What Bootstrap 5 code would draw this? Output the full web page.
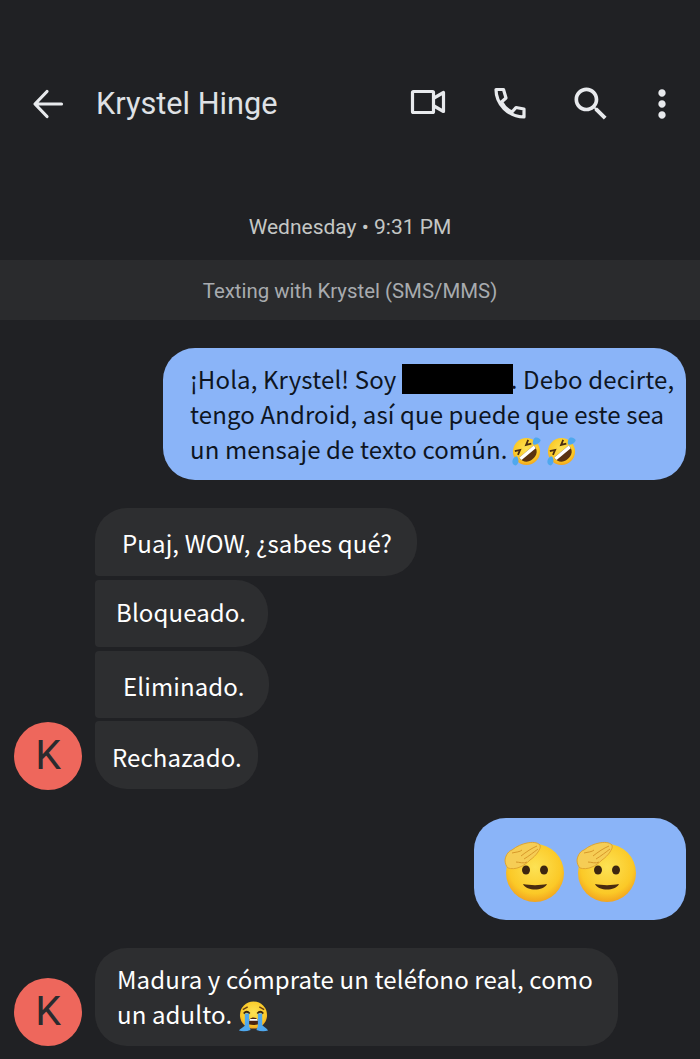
<!DOCTYPE html>
<html lang="es">
<head>
    <meta charset="UTF-8">
    <meta name="viewport" content="width=device-width, initial-scale=1.0">
    <title>Krystel Hinge</title>
    <link href="https://cdn.jsdelivr.net/npm/bootstrap@5.3.0/dist/css/bootstrap.min.css" rel="stylesheet">
    <style>
        html, body { height: 1059px; overflow: hidden; }
        body { background: #202124; color: #fff; font-family: "Noto Sans CJK JP", "Noto Sans", sans-serif; }
        .top-bar { height: 60px; margin-top: 74px; padding-left: 26px; color: #e8eaed; }
        .top-bar svg { width: 44px; height: 44px; fill: currentColor; flex: none; }
        .top-bar svg.line-ic { fill: none; stroke: currentColor; stroke-width: 3.200; stroke-linejoin: round; stroke-linecap: round; }
        .top-title { font-family: Roboto, sans-serif; font-size: 30.700px; margin-left: 26px; color: #dfe1e5; }
        .ic-video { margin-right: 38px; }
        .ic-phone { margin-right: 37px; }
        .ic-search { margin-right: 27px; }
        .ic-more { margin-right: 16px; }
        .date-line { font-family: Roboto, sans-serif; font-size: 21px; color: #c4c7c5; text-align: center; margin-top: 79px; height: 47px; line-height: 28px; }
        .sms-band { background: #2a2b2d; height: 60px; line-height: 62px; text-align: center; font-family: Roboto, sans-serif; font-size: 20.400px; color: #a8abaf; }
        .thread { padding: 28px 14px 0; }
        .msg { font-size: 24px; line-height: 35px; letter-spacing: .12px; }
        .msg-out { background: #8ab4f8; color: #0e1522; border-radius: 32px; }
        .msg-in { background: #2d2e30; color: #fff; }
        .msg-hello { width: 523px; height: 132px; padding: 13px 0 0 27px; white-space: nowrap; }
        .hidden-name { display: inline-block; background: #000; width: 111px; height: 30px; vertical-align: -5px; margin-right: -2px; }
        .msg-salute { width: 212px; height: 102px; padding: 23px 0 0 29px; margin-top: 338px; }
        .salute { width: 66px; height: 66px; margin-right: 6px; display: inline-block; vertical-align: top; }
        .emo { width: 31px; height: 31px; vertical-align: -8px; }
        .emo-first { margin-left: -2px; margin-right: -1px; }
        .in-list { position: absolute; left: 95px; top: 508px; }
        .in-list .msg-in { height: 68px; width: max-content; margin-bottom: 4px; border-radius: 4px 32px 32px 4px; }
        .in-list .b1 { padding: 0 25px 0 27px; border-top-left-radius: 32px; line-height: 70px; }
        .in-list .b2 { padding: 0 22px 0 21px; height: 67px; line-height: 63px; }
        .in-list .b3 { padding: 0 24px 0 28px; height: 67px; margin-bottom: 3px; line-height: 69px; }
        .in-list .b4 { padding: 0 16px 0 17px; border-bottom-left-radius: 32px; line-height: 72px; }
        .avatar { position: absolute; left: 14px; width: 68px; height: 68px; border-radius: 50%; background: #ee675c; color: #2a2b2e; font-family: Roboto, sans-serif; font-weight: 400; font-size: 41px; }
        .av1 { top: 722px; }
        .av2 { top: 978px; }
        .msg-last { position: absolute; left: 95px; top: 948px; width: 523px; height: 98px; padding: 13px 0 0 22px; border-radius: 32px; }
    </style>
</head>
<body>
    <svg width="0" height="0" class="position-absolute">
        <defs>
            <radialGradient id="yel" cx="50%" cy="40%" r="60%">
                <stop offset="0" stop-color="#fde254"/>
                <stop offset="0.75" stop-color="#fbc927"/>
                <stop offset="1" stop-color="#f2a41f"/>
            </radialGradient>
            <symbol id="rofl" viewBox="0 0 32 32">
                <circle cx="16" cy="16" r="14" fill="url(#yel)"/>
                <g transform="rotate(-40 16 16)">
                    <path d="M6 16h20c0 7-4 10-10 10s-10-3-10-10z" fill="#5a3210"/>
                    <path d="M6 16h20l-.5 3.500h-19z" fill="#fff"/>
                    <path d="M7 8l5 2.500-5 2.500M25 8l-5 2.500 5 2.500" fill="none" stroke="#4a2c10" stroke-width="1.800"/>
                </g>
                <path d="M25 1.500c4 0 6 2 5.500 3.500-1 2.500-4.500 4.500-7 4-2-1-1-6 1.500-7.500z" fill="#4fa8ee"/>
                <path d="M5 30.500c-3-.5-4-3-3.500-5 .5-2 2.500-4.500 4-4.500 2.500 1 3.500 7 -.5 9.500z" fill="#4fa8ee"/>
            </symbol>
            <symbol id="salute" viewBox="0 0 66 66">
                <circle cx="32" cy="32" r="29" fill="url(#yel)"/>
                <ellipse cx="23" cy="29" rx="4" ry="4.600" fill="#3d2610"/>
                <ellipse cx="41" cy="29" rx="4" ry="4.600" fill="#3d2610"/>
                <path d="M20 43c7 1.500 17 1.500 24 0-2 4-7 5.500-12 5.500S22 47 20 43z" fill="#4a2c10"/>
                <path d="M2 19C3 13 6 10 9 9 14 5 19 3 24 2 29 1 34 1 37 4 38 7 36 9 35 11 33 14 30 17 27 19 24 22 20 25 17 26 13 28 8 28 5 27 3 25 2 22 2 19z" fill="#f6cd55" stroke="#e0a52f" stroke-width="1"/>
                <path d="M18 15C23 11 29 7 34 5M21 18C26 15 31 11 35 8M13 21C16 21 21 23 24 21M9 12C13 11 17 11 19 9" fill="none" stroke="#d8992a" stroke-width="1"/>
            </symbol>
            <symbol id="sob" viewBox="0 0 32 32">
                <circle cx="16" cy="14.500" r="14" fill="url(#yel)"/>
                <path d="M5 9l5-3M27 9l-5-3" stroke="#6a4012" stroke-width="1.500" fill="none"/>
                <path d="M6 13c2-2.500 4-2.500 6 0M20 13c2-2.500 4-2.500 6 0" stroke="#3d2610" stroke-width="2" fill="none"/>
                <path d="M11 24c0-5 2-7 5-7s5 2 5 7c-3 1-7 1-10 0z" fill="#4a2410"/>
                <path d="M12.500 18.500h7l1 2h-9z" fill="#fff"/>
                <path d="M7 13h4.500v13l1.500 4c-4 1.500-9 1.500-12 .5 1-2 4-3 6-5z" fill="#4fa8ee"/>
                <path d="M20.500 13H25v12c2 2 5 3 6 5.500-3 1-8 1-12-.5l1.500-4z" fill="#4fa8ee"/>
            </symbol>
        </defs>
    </svg>

    <div class="top-bar d-flex align-items-center">
        <svg class="line-ic" viewBox="0 0 44 44"><path d="M35.500 22H9.500M21 9.500 9 22l12 12.500"/></svg>
        <div class="top-title">Krystel Hinge</div>
        <svg class="line-ic ic-video ms-auto" viewBox="0 0 44 44"><rect x="6.500" y="9.500" width="21" height="21" rx="1"/><path d="M28 16l9.500-5.500v19L28 24"/></svg>
        <svg class="line-ic ic-phone" viewBox="0 0 44 44"><path d="M8 7.500h7.500L18 16l-4.500 4c2.500 5 6 8 10.500 10l4-4.500 8 1.500v8C20 34.500 8 22 8 7.500z"/></svg>
        <svg class="ic-search" viewBox="0 0 24 24"><path d="M15.500 14h-.79l-.28-.27C15.410 12.590 16 11.110 16 9.500 16 5.910 13.090 3 9.500 3S3 5.910 3 9.500 5.910 16 9.500 16c1.610 0 3.090-.59 4.230-1.570l.27.28v.79l5 4.990L20.490 19l-4.990-5zm-6 0C7.010 14 5 11.990 5 9.500S7.010 5 9.500 5 14 7.010 14 9.500 11.990 14 9.500 14z"/></svg>
        <svg class="ic-more" viewBox="0 0 24 24"><path d="M12 8c1.100 0 2-.9 2-2s-.9-2-2-2-2 .9-2 2 .9 2 2 2zm0 2c-1.100 0-2 .9-2 2s.9 2 2 2 2-.9 2-2-.9-2-2-2zm0 6c-1.100 0-2 .9-2 2s.9 2 2 2 2-.9 2-2-.9-2-2-2z"/></svg>
    </div>

    <div class="date-line">Wednesday • 9:31 PM</div>
    <div class="sms-band">Texting with Krystel (SMS/MMS)</div>

    <div class="thread d-flex flex-column align-items-end">
        <div class="msg msg-out msg-hello">¡Hola, Krystel! Soy <span class="hidden-name"></span>. Debo decirte,<br>tengo Android, así que puede que este sea<br>un mensaje de texto común. <svg class="emo emo-first"><use href="#rofl"/></svg> <svg class="emo"><use href="#rofl"/></svg></div>
        <div class="msg msg-out msg-salute"><svg class="salute"><use href="#salute"/></svg><svg class="salute"><use href="#salute"/></svg></div>
    </div>

    <div class="in-list">
        <div class="msg msg-in b1">Puaj, WOW, ¿sabes qué?</div>
        <div class="msg msg-in b2">Bloqueado.</div>
        <div class="msg msg-in b3">Eliminado.</div>
        <div class="msg msg-in b4">Rechazado.</div>
    </div>
    <div class="avatar av1 d-flex align-items-center justify-content-center">K</div>

    <div class="avatar av2 d-flex align-items-center justify-content-center">K</div>
    <div class="msg msg-in msg-last">Madura y cómprate un teléfono real, como<br>un adulto. <svg class="emo"><use href="#sob"/></svg></div>

    <script src="https://cdn.jsdelivr.net/npm/bootstrap@5.3.0/dist/js/bootstrap.bundle.min.js"></script>
</body>
</html>
